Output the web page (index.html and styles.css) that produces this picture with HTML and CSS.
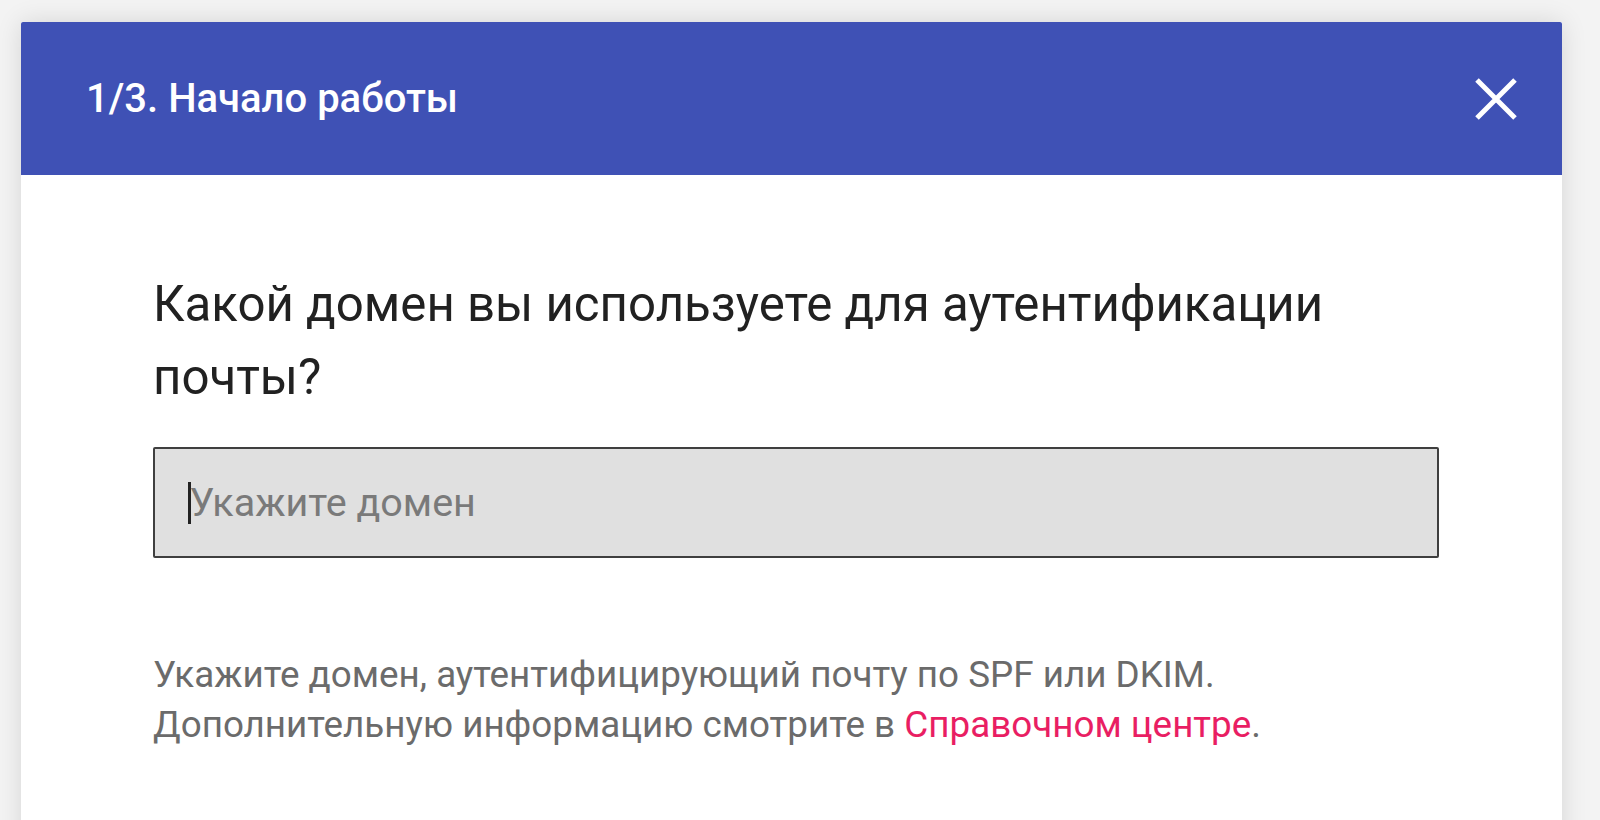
FILE: index.html
```html
<!DOCTYPE html>
<html lang="ru">
<head>
<meta charset="utf-8">
<title>Начало работы</title>
<link rel="stylesheet" href="styles.css">
</head>
<body>
<div class="dialog">
  <div class="dialog-header">
    <div class="dialog-title">1/3. Начало работы</div>
    <button class="close-btn" aria-label="Закрыть">
      <svg width="44" height="44" viewBox="0 0 44 44"><path d="M3 3L41 41M41 3L3 41" stroke="#fff" stroke-width="5" stroke-linecap="butt"/></svg>
    </button>
  </div>
  <div class="dialog-body">
    <h2 class="question">Какой домен вы используете для аутентификации почты?</h2>
    <div class="field">
      <span class="caret"></span><span class="placeholder">Укажите домен</span>
    </div>
    <p class="help">Укажите домен, аутентифицирующий почту по SPF или DKIM.<br>Дополнительную информацию смотрите в <a class="link" href="#">Справочном центре</a>.</p>
  </div>
</div>
</body>
</html>
```
FILE: styles.css
```css
html, body {
  margin: 0;
  padding: 0;
  height: 100%;
  overflow: hidden;
}
body {
  background: #f3f3f3;
  font-family: Roboto, "Noto Sans", Arial, sans-serif;
  padding: 22px 0 0 21px;
  box-sizing: border-box;
}
.dialog {
  width: 1541px;
  height: 900px;
  background: #fff;
  box-shadow: 0 0 24px rgba(0,0,0,0.12);
}
.dialog-header {
  height: 153px;
  background: #3f51b5;
  display: flex;
  align-items: center;
  justify-content: space-between;
  padding: 0 44px 0 65px;
  border-radius: 2px 2px 0 0;
}
.dialog-title {
  color: #fff;
  font-size: 40px;
  font-weight: 500;
}
.close-btn {
  background: none;
  border: 0;
  padding: 0;
  width: 44px;
  height: 44px;
  display: flex;
}
.dialog-body {
  padding: 93px 0 0 132px;
}
.question {
  margin: 0;
  font-size: 49.2px;
  font-weight: 400;
  line-height: 73px;
  color: #212121;
  width: 1200px;
}
.field {
  margin-top: 33px;
  width: 1249px;
  height: 107px;
  background: #e0e0e0;
  border: 2.5px solid #3f3f3f;
  border-radius: 2px;
  display: flex;
  align-items: center;
  padding-left: 33px;
}
.caret {
  width: 2.5px;
  height: 42px;
  background: #222;
  margin-right: -1px;
}
.placeholder {
  font-size: 39.5px;
  color: #7a7a7a;
}
.help {
  margin: 92px 0 0;
  font-size: 36.8px;
  line-height: 50px;
  color: #6b6b6b;
}
.link {
  color: #e91e63;
  text-decoration: none;
}
```
